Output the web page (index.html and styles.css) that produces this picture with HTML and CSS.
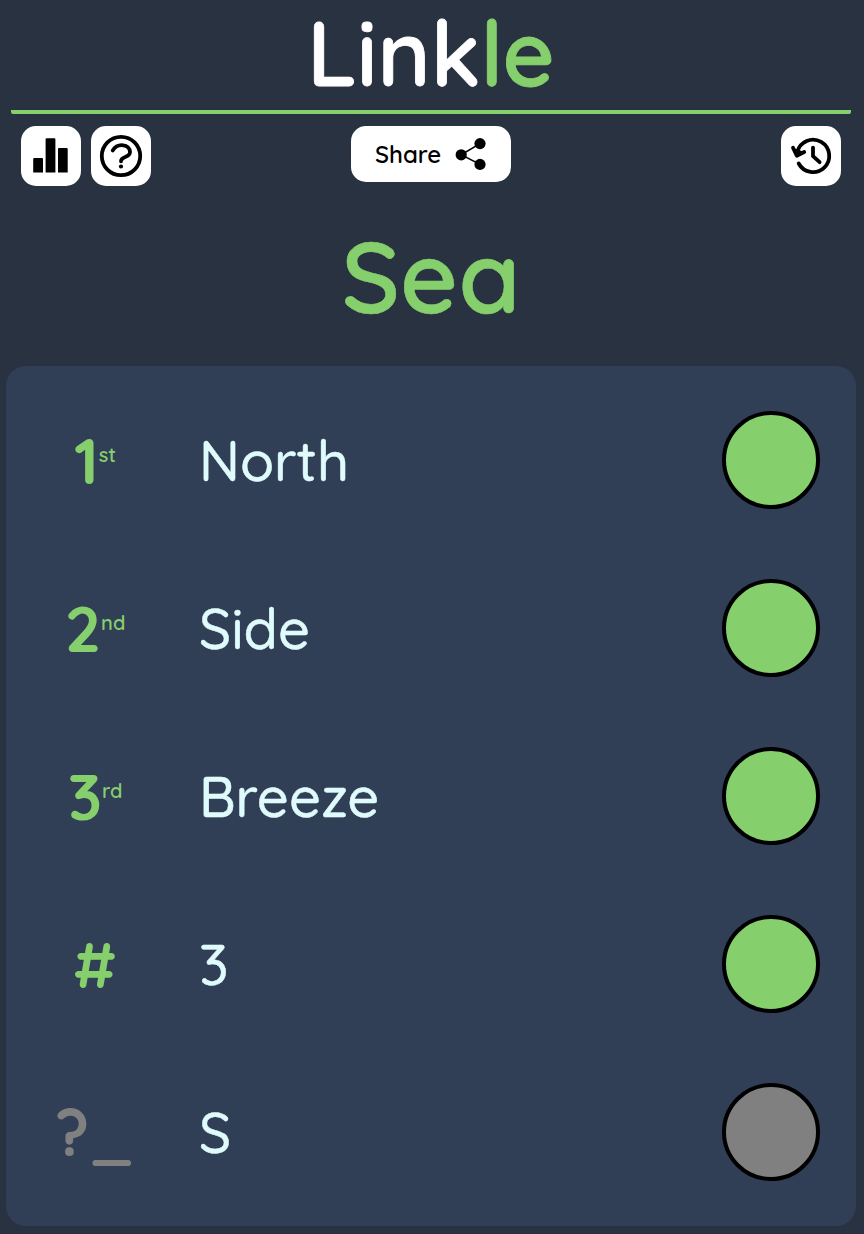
FILE: index.html
```html
<!DOCTYPE html>
<html lang="en">
<head>
<meta charset="utf-8">
<title>Linkle</title>
<link rel="stylesheet" href="styles.css">
</head>
<body>
<header class="header"><div class="title">Link<span class="accent">le</span></div></header>
<nav class="toolbar">
  <div class="group">
    <button class="icon-button" aria-label="Statistics"><svg viewBox="0 0 60 60"><path d="M12.2 33q0-1 1-1h7.8q1 0 1 1v13.6h-9.8zM24.6 13.2q0-1 1-1h7.8q1 0 1 1v33.4h-9.8zM37 23q0-1 1-1h7.7q1 0 1 1v23.6H37z"/></svg></button>
    <button class="icon-button" aria-label="Help"><svg viewBox="0 0 60 60"><g class="line"><circle cx="30" cy="30" r="19.2"/><path d="M21.7 24.4C26.7 16.4 39 18.2 39 26C39 32.2 30 30 30 35.3"/></g><circle cx="30" cy="40.5" r="2.1"/></svg></button>
  </div>
  <button class="share"><span class="share-label">Share</span><svg class="share-icon" viewBox="0 0 32 34"><path class="link" d="M25 6.6L6.2 17.8L25 27.4"/><circle cx="25" cy="6.6" r="5.6"/><circle cx="6.2" cy="17.8" r="5.6"/><circle cx="25" cy="27.4" r="5.6"/></svg></button>
  <button class="icon-button" aria-label="History"><svg viewBox="0 0 60 60"><g class="line"><path d="M17.7 37.5A16.2 16.2 0 1 0 16.3 26"/><path class="tip" d="M12 21.8L15.8 29.7L23.2 26"/><path d="M32 21.6V30.2L38.6 36.2"/></g></svg></button>
</nav>
<h1 class="answer">Sea</h1>
<main class="card">
  <section class="row"><div class="rank">1<sup>st</sup></div><div class="word">North</div><span class="dot"></span></section>
  <section class="row"><div class="rank">2<sup>nd</sup></div><div class="word">Side</div><span class="dot"></span></section>
  <section class="row"><div class="rank">3<sup>rd</sup></div><div class="word">Breeze</div><span class="dot"></span></section>
  <section class="row"><div class="rank">#</div><div class="word">3</div><span class="dot"></span></section>
  <section class="row missed"><div class="rank">?_</div><div class="word">S</div><span class="dot"></span></section>
</main>
</body>
</html>
```

FILE: styles.css
```css
* { box-sizing: border-box; }
body { margin: 0; height: 1234px; background: #293241; font-family: Quicksand, Lato, sans-serif; }
svg { display: block; }
.header { height: 114px; margin: 0 13px 0 11px; border-bottom: 4px solid #86cf6d; border-radius: 2px; display: flex; justify-content: center; color: #fff; }
.title { font-size: 90px; font-weight: 600; line-height: 106px; -webkit-text-stroke: .8px; }
.accent { color: #86cf6d; }
.toolbar { display: grid; grid-template-columns: 1fr 160px 1fr; align-items: start; padding: 12px 23px 0 21px; height: 72px; }
.group { display: flex; gap: 10px; }
button { border: 0; padding: 0; background: #fff; color: #000; border-radius: 15px; font-family: inherit; }
.icon-button { width: 60px; height: 60px; }
.toolbar > .icon-button { justify-self: end; }
.share { width: 160px; height: 56px; display: flex; align-items: center; padding-left: 24px; gap: 14px; }
.share-label { font-size: 24px; font-weight: 600; line-height: 56px; }
.share-icon { width: 32px; height: 34px; }
.line { fill: none; stroke: #000; stroke-width: 3.8px; stroke-linecap: round; stroke-linejoin: round; }
.tip { fill: #000; }
.link { fill: none; stroke: #000; stroke-width: 1.6px; }
.answer { margin: 0; height: 180px; text-align: center; color: #86cf6d; font-size: 100px; font-weight: 600; line-height: 180px; padding-right: 2px; -webkit-text-stroke: .6px; }
.card { margin: 0 8px 0 6px; height: 860px; padding: 10px 36px 10px 10px; border-radius: 20px; background: #303e56; }
.row { height: 168px; display: flex; align-items: center; }
.rank { width: 158px; color: #86cf6d; font-size: 64px; font-weight: 700; line-height: 168px; text-align: center; }
.rank sup { font-size: 20px; font-weight: 600; line-height: 0; }
.word { margin-left: 25px; color: #e0fbfc; font-size: 56px; font-weight: 500; line-height: 168px; -webkit-text-stroke: .5px; }
.dot { width: 98px; height: 98px; margin-left: auto; border: 4px solid #000; border-radius: 50%; background: #86cf6d; }
.missed .rank { color: #808080; }
.missed .dot { background: #808080; }
```
